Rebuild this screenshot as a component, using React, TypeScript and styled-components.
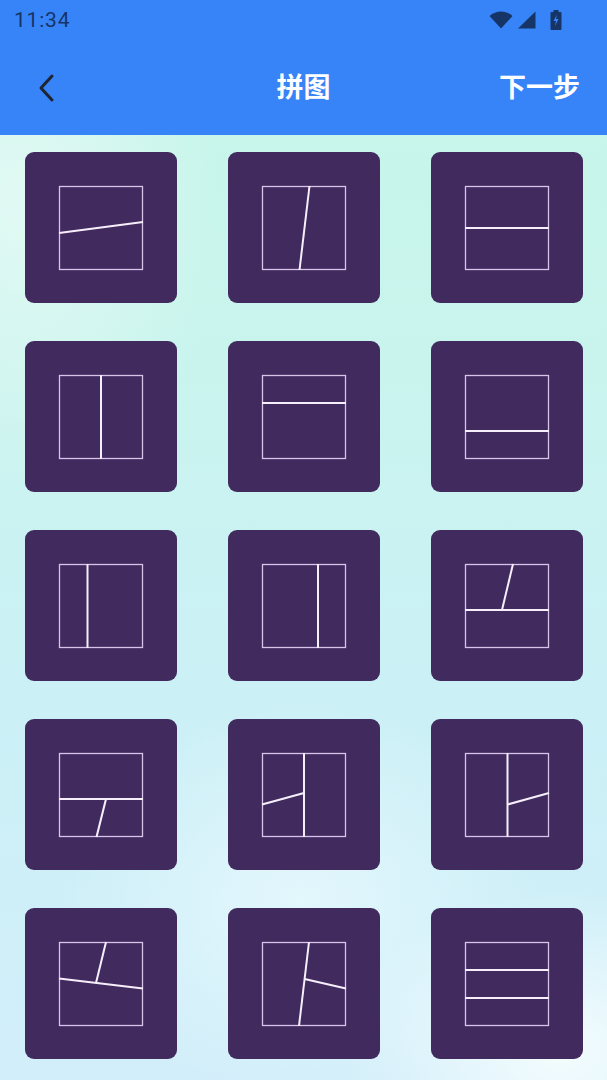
import styled, { createGlobalStyle } from "styled-components"

type Seg = [number, number, number, number]

// divider lines of each collage layout, in a 84 x 84 frame
const layouts: Seg[][] = [
	[[0, 47, 84, 36]],
	[[47.5, 0, 37.5, 84]],
	[[0, 42, 84, 42]],
	[[42, 0, 42, 84]],
	[[0, 28, 84, 28]],
	[[0, 56, 84, 56]],
	[[28.5, 0, 28.5, 84]],
	[[56, 0, 56, 84]],
	[[0, 46, 84, 46], [48, 0, 37, 46]],
	[[0, 46, 84, 46], [47, 46, 37.5, 84]],
	[[42, 0, 42, 84], [0, 51.5, 42, 40]],
	[[42.5, 0, 42.5, 84], [42.5, 51.5, 84, 40]],
	[[0, 36.5, 84, 46.5], [47, 0, 37, 40.9]],
	[[47, 0, 37, 84], [42.6, 37, 84, 46.5]],
	[[0, 28, 84, 28], [0, 56, 84, 56]],
]

const GlobalStyle = createGlobalStyle`
	body {
		margin: 0;
		font-family: Roboto, "Noto Sans CJK SC", sans-serif;
	}
`

export default function App() {
	return (
		<Page>
			<GlobalStyle />
			<Header>
				<StatusBar>
					<Time>11:34</Time>
					<StatusIcons>
						<svg width="24" height="18" viewBox="0 0 24 18">
							<path d="M12 17.5 L0.5 5 C7 -1 17 -1 23.5 5 Z" fill="#173466" />
						</svg>
						<svg width="19" height="18" viewBox="0 0 19 18">
							<path d="M18.5 0.5 V17.5 H1 Z" fill="#173466" />
						</svg>
						<svg width="12" height="20" viewBox="0 0 12 20">
							<rect x="3.5" y="0" width="5" height="2.5" fill="#173466" />
							<rect x="0.5" y="2" width="11" height="18" rx="1" fill="#173466" />
							<path d="M7 4.5 L3.5 11 H6 L5 16 L8.5 9 H6 Z" fill="#3784f8" />
						</svg>
					</StatusIcons>
				</StatusBar>
				<Toolbar>
					<BackButton aria-label="back">
						<svg width="22" height="30" viewBox="0 0 22 30">
							<path d="M16 3 L5 15 L16 27" fill="none" stroke="#1f2430" strokeWidth="3" strokeLinecap="round" strokeLinejoin="round" />
						</svg>
					</BackButton>
					<Title>拼图</Title>
					<NextButton>下一步</NextButton>
				</Toolbar>
			</Header>
			<Grid>
				{layouts.map((segs, i) => (
					<Tile key={i}>
						<svg width="84" height="84" viewBox="0 0 84 84" overflow="visible">
							<rect x="0.5" y="0.5" width="83" height="83" fill="none" stroke="#d7c4e8" strokeWidth="1.3" />
							{segs.map(([x1, y1, x2, y2], j) => (
								<line key={j} x1={x1} y1={y1} x2={x2} y2={y2} stroke="#f6effb" strokeWidth="2" />
							))}
						</svg>
					</Tile>
				))}
			</Grid>
		</Page>
	)
}

const Page = styled.div`
	width: 607px;
	height: 1080px;
	overflow: hidden;
	display: flex;
	flex-direction: column;
	background:
		radial-gradient(ellipse 220px 160px at 560px 1050px, rgba(250, 255, 255, 0.85), rgba(250, 255, 255, 0) 100%),
		radial-gradient(ellipse 240px 200px at 300px 900px, rgba(240, 252, 255, 0.6), rgba(240, 252, 255, 0) 100%),
		radial-gradient(ellipse 200px 300px at 20px 200px, rgba(232, 250, 246, 0.8), rgba(232, 250, 246, 0) 100%),
		linear-gradient(180deg, #c6f6e8 0%, #c9f4ee 35%, #cbf0f6 65%, #d2eefa 100%);
`
const Header = styled.header`
	background: #3784f8;
	height: 135px;
	display: flex;
	flex-direction: column;
	flex-shrink: 0;
`
const StatusBar = styled.div`
	height: 42px;
	display: flex;
	align-items: center;
	justify-content: space-between;
	padding: 0 45px 0 14px;
	box-sizing: border-box;
`
const Time = styled.span`
	font-family: Roboto, sans-serif;
	font-size: 21px;
	letter-spacing: 0.8px;
	color: #173466;
	margin-top: -2px;
`
const StatusIcons = styled.div`
	display: flex;
	align-items: center;
	gap: 4px;
	margin-top: -2px;
	svg:last-child {
		margin-left: 10px;
	}
`
const Toolbar = styled.div`
	flex: 1;
	display: grid;
	grid-template-columns: 1fr auto 1fr;
	align-items: center;
	padding: 0 27px;
	margin-top: -6px;
`
const BackButton = styled.button`
	justify-self: start;
	background: none;
	border: none;
	padding: 0;
	margin-left: 9px;
	margin-top: 4px;
	display: flex;
`
const Title = styled.h1`
	margin: 0;
	font-family: "Noto Sans CJK SC", sans-serif;
	font-size: 27px;
	font-weight: 700;
	color: #fff;
`
const NextButton = styled.span`
	justify-self: end;
	font-family: "Noto Sans CJK SC", sans-serif;
	font-size: 27px;
	font-weight: 700;
	color: #fff;
`
const Grid = styled.main`
	display: grid;
	grid-template-columns: repeat(3, 152px);
	grid-auto-rows: 151px;
	column-gap: 51px;
	row-gap: 38px;
	padding: 17px 0 0 25px;
`
const Tile = styled.div`
	background: #412a5e;
	border-radius: 9px;
	display: flex;
	align-items: center;
	justify-content: center;
`
